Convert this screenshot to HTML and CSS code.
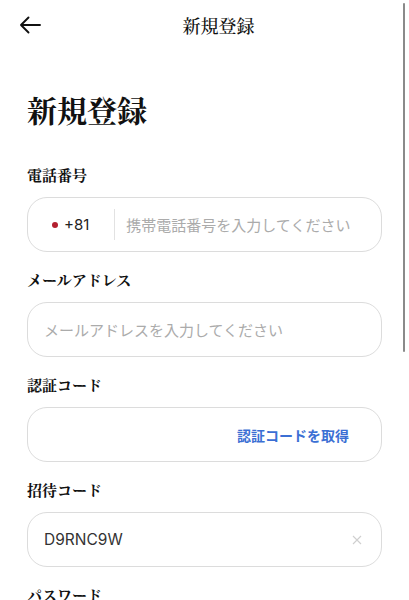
FILE: index.html
```html
<!DOCTYPE html>
<html lang="ja">
<head>
<meta charset="utf-8">
<link rel="stylesheet" href="styles.css">
</head>
<body>
<div class="page">
  <header class="topbar">
    <svg class="back" width="22" height="18" viewBox="0 0 22 18"><path d="M21 9H2M9.5 1.5L2 9l7.5 7.5" fill="none" stroke="#111" stroke-width="1.9" stroke-linecap="round" stroke-linejoin="round"/></svg>
    <div class="title">新規登録</div>
  </header>
  <main class="content">
    <h1 class="heading">新規登録</h1>

    <div class="label">電話番号</div>
    <div class="field">
      <span class="dot"></span><span class="cc">+81</span><span class="sep"></span>
      <span class="ph">携帯電話番号を入力してください</span>
    </div>

    <div class="label">メールアドレス</div>
    <div class="field">
      <span class="ph">メールアドレスを入力してください</span>
    </div>

    <div class="label">認証コード</div>
    <div class="field field-end">
      <span class="getcode">認証コードを取得</span>
    </div>

    <div class="label">招待コード</div>
    <div class="field field-between">
      <span class="val">D9RNC9W</span>
      <svg class="clear" width="10" height="10" viewBox="0 0 10 10"><path d="M1 1l8 8M9 1l-8 8" stroke="#cfcfcf" stroke-width="1.1"/></svg>
    </div>

    <div class="label">パスワード</div>
  </main>
  <div class="scrollbar"></div>
</div>
</body>
</html>
```
FILE: styles.css
```css
html, body {
  margin: 0;
  padding: 0;
  background: #fff;
}
.page {
  position: relative;
  width: 409px;
  height: 600px;
  overflow: hidden;
  font-family: "Noto Sans CJK JP", "Noto Sans", sans-serif;
}
.topbar {
  position: relative;
  height: 50px;
  display: flex;
  align-items: center;
  justify-content: center;
}
.back {
  position: absolute;
  left: 19px;
  top: 16px;
}
.title {
  font-family: "Noto Serif CJK JP", "IPAMincho", "Liberation Serif", serif;
  font-size: 18px;
  font-weight: 500;
  color: #111;
  margin-left: 28px;
}
.content {
  padding: 0 27px;
}
.heading {
  margin: 39px 0 36px;
  font-family: "Noto Serif CJK JP", "IPAMincho", "Liberation Serif", serif;
  font-size: 30px;
  line-height: 40px;
  font-weight: 700;
  color: #111;
}
.label {
  font-family: "Noto Serif CJK JP", "IPAMincho", "Liberation Serif", serif;
  font-size: 15px;
  line-height: 20px;
  font-weight: 700;
  color: #111;
  margin-bottom: 12px;
}
.field {
  box-sizing: border-box;
  height: 55px;
  border: 1px solid #dcdcdc;
  border-radius: 20px;
  display: flex;
  align-items: center;
  padding: 0 16px;
  margin-bottom: 18px;
  font-size: 15px;
}
.field-end {
  justify-content: flex-end;
  padding-right: 32px;
}
.field-between {
  justify-content: space-between;
  padding-right: 19px;
}
.dot {
  width: 6px;
  height: 6px;
  border-radius: 50%;
  background: #b3202f;
  margin-left: 8px;
  margin-right: 6px;
}
.cc {
  color: #222;
  font-family: "Inter", "Noto Sans", sans-serif;
  font-size: 15px;
}
.sep {
  width: 1px;
  height: 31px;
  background: #e2e2e2;
  margin: 0 11px 0 25px;
}
.ph {
  color: #ababab;
  font-size: 15px;
  white-space: nowrap;
}
.getcode {
  color: #3b6fd4;
  font-size: 14px;
  font-weight: 700;
}
.val {
  color: #333;
  font-family: "Inter", "Noto Sans", sans-serif;
  font-size: 15.5px;
}
.scrollbar {
  position: absolute;
  right: 4px;
  top: 3px;
  width: 2.5px;
  height: 349px;
  background: #8a8a8a;
  border-radius: 2px;
}
```
